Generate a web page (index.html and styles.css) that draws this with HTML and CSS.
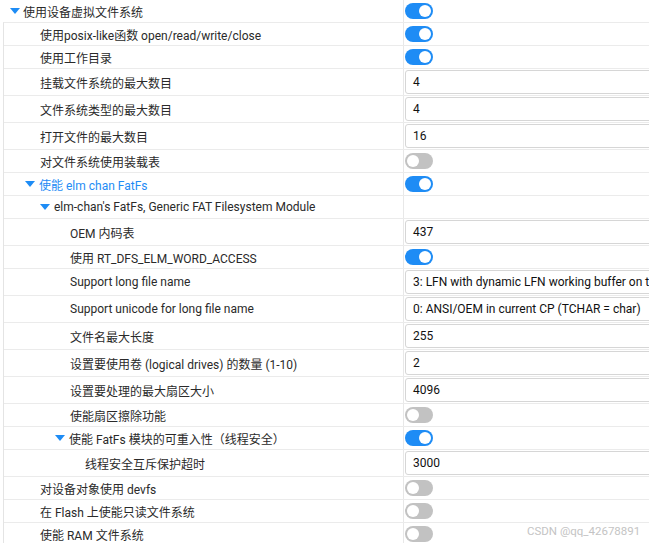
FILE: index.html
```html
<!DOCTYPE html>
<html>

<head>
    <meta charset="UTF-8">
    <title>组件配置</title>
    <link rel="stylesheet" href="styles.css">
</head>

<body>
    <main class="tree">
        <div class="row root">
            <div class="label lv0"><span class="tri"></span>使用设备虚拟文件系统</div>
            <div class="value"><span class="switch on"></span></div>
        </div>

        <div class="children">
            <div class="row">
                <div class="label lv1">使用posix-like函数 open/read/write/close</div>
                <div class="value"><span class="switch on"></span></div>
            </div>
            <div class="row">
                <div class="label lv1">使用工作目录</div>
                <div class="value"><span class="switch on"></span></div>
            </div>
            <div class="row tall">
                <div class="label lv1">挂载文件系统的最大数目</div>
                <div class="value"><div class="field">4</div></div>
            </div>
            <div class="row tall">
                <div class="label lv1">文件系统类型的最大数目</div>
                <div class="value"><div class="field">4</div></div>
            </div>
            <div class="row tall">
                <div class="label lv1">打开文件的最大数目</div>
                <div class="value"><div class="field">16</div></div>
            </div>
            <div class="row">
                <div class="label lv1">对文件系统使用装载表</div>
                <div class="value"><span class="switch"></span></div>
            </div>
            <div class="row">
                <div class="label lv1 group selected"><span class="tri"></span>使能 elm chan FatFs</div>
                <div class="value"><span class="switch on"></span></div>
            </div>
            <div class="row">
                <div class="label lv2 group"><span class="tri"></span>elm-chan's FatFs, Generic FAT Filesystem Module</div>
                <div class="value"></div>
            </div>
            <div class="row tall">
                <div class="label lv3">OEM 内码表</div>
                <div class="value"><div class="field">437</div></div>
            </div>
            <div class="row">
                <div class="label lv3">使用 RT_DFS_ELM_WORD_ACCESS</div>
                <div class="value"><span class="switch on"></span></div>
            </div>
            <div class="row tall">
                <div class="label lv3">Support long file name</div>
                <div class="value"><div class="field">3: LFN with dynamic LFN working buffer on the heap</div></div>
            </div>
            <div class="row tall">
                <div class="label lv3">Support unicode for long file name</div>
                <div class="value"><div class="field">0: ANSI/OEM in current CP (TCHAR = char)</div></div>
            </div>
            <div class="row tall">
                <div class="label lv3">文件名最大长度</div>
                <div class="value"><div class="field">255</div></div>
            </div>
            <div class="row tall">
                <div class="label lv3">设置要使用卷 (logical drives) 的数量 (1-10)</div>
                <div class="value"><div class="field">2</div></div>
            </div>
            <div class="row tall">
                <div class="label lv3">设置要处理的最大扇区大小</div>
                <div class="value"><div class="field">4096</div></div>
            </div>
            <div class="row">
                <div class="label lv3">使能扇区擦除功能</div>
                <div class="value"><span class="switch"></span></div>
            </div>
            <div class="row">
                <div class="label lv3 group"><span class="tri"></span>使能 FatFs 模块的可重入性（线程安全）</div>
                <div class="value"><span class="switch on"></span></div>
            </div>
            <div class="row tall">
                <div class="label lv4">线程安全互斥保护超时</div>
                <div class="value"><div class="field">3000</div></div>
            </div>
            <div class="row">
                <div class="label lv1">对设备对象使用 devfs</div>
                <div class="value"><span class="switch"></span></div>
            </div>
            <div class="row">
                <div class="label lv1">在 Flash 上使能只读文件系统</div>
                <div class="value"><span class="switch"></span></div>
            </div>
            <div class="row">
                <div class="label lv1">使能 RAM 文件系统</div>
                <div class="value"><span class="switch"></span></div>
            </div>
        </div>
    </main>

    <div class="watermark">CSDN @qq_42678891</div>
</body>

</html>
```

FILE: styles.css
```css
body {
    margin: 0;
    background-color: white;
    font-family: Roboto, "Noto Sans CJK SC", sans-serif;
    color: #2a2a2a;
    overflow: hidden;
}

.tree {
    width: 649px;
    overflow: hidden;
}

.row {
    display: flex;
    height: 22px;
    border-bottom: 1px solid #ebebeb;
}

.row.tall {
    height: 26px;
}

.children .row:last-child {
    border-bottom: none;
}

.root {
    border-bottom: none;
}

.children {
    margin-left: 3px;
    border-left: 1px solid #e4e4e4;
    border-top: 1px solid #ebebeb;
}

.label {
    box-sizing: border-box;
    flex: none;
    width: 400px;
    border-right: 1px solid #e8e8e8;
    display: flex;
    align-items: center;
    font-size: 12px;
    white-space: nowrap;
}

.root .label {
    width: 404px;
}

/* indent: text starts at 40px, +15 for every level */
.lv0 {
    padding-left: 10px;
}

.lv1 {
    padding-left: 36px;
}

.lv2 {
    padding-left: 51px;
}

.lv3 {
    padding-left: 66px;
}

.lv4 {
    padding-left: 81px;
}

.lv1.group {
    padding-left: 21px;
}

.lv2.group {
    padding-left: 36px;
}

.lv3.group {
    padding-left: 51px;
}

.tri {
    width: 0;
    height: 0;
    border-left: 5.5px solid transparent;
    border-right: 5.5px solid transparent;
    border-top: 6px solid #1e8cf5;
    margin-right: 4px;
}

.lv0 .tri {
    margin-right: 3px;
}

.selected {
    color: #1e8cf5;
}

.value {
    flex: 1;
    display: flex;
    align-items: center;
    padding-left: 1px;
    overflow: hidden;
}

.switch {
    position: relative;
    display: block;
    width: 28px;
    height: 16px;
    border-radius: 8px;
    background-color: #c2c2c2;
}

.switch::after {
    content: "";
    position: absolute;
    top: 2px;
    left: 2px;
    width: 12px;
    height: 12px;
    border-radius: 50%;
    background-color: white;
}

.switch.on {
    background-color: #1e8cf5;
}

.switch.on::after {
    left: 14px;
}

.field {
    box-sizing: border-box;
    flex: none;
    width: 420px;
    height: 24px;
    border: 1px solid #d6d6d6;
    border-radius: 3px;
    padding-left: 7px;
    font-family: Roboto, "Noto Sans CJK SC", sans-serif;
    font-size: 12px;
    line-height: 22px;
    color: #111;
    white-space: nowrap;
}

.watermark {
    position: absolute;
    left: 527px;
    top: 524px;
    font-size: 11.5px;
    color: #c4c4c4;
}
```
